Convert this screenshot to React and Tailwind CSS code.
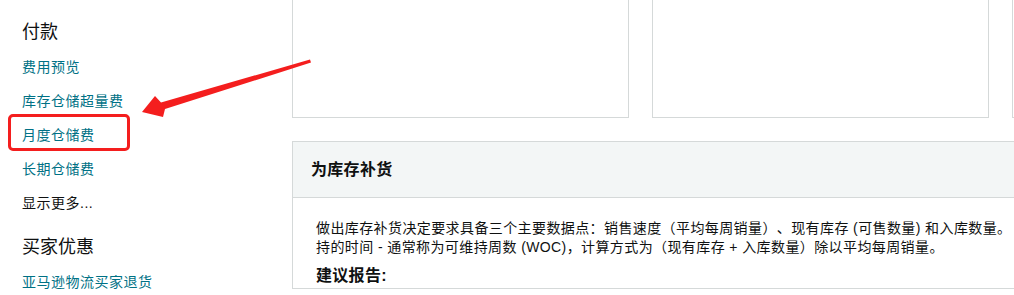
import React from "react";

const font = { fontFamily: '"Liberation Sans", "Noto Sans CJK SC", sans-serif' };

function Link({ children, dark }) {
  return (
    <div className={`h-[34px] leading-[34px] text-[14px] tracking-[0.5px] whitespace-nowrap ${dark ? "text-[#0f1111]" : "text-[#007185]"}`}>
      {children}
    </div>
  );
}

export default function App() {
  return (
    <div
      className="relative w-[1014px] h-[295px] overflow-hidden bg-white flex"
      style={font}
    >
      {/* Sidebar */}
      <div className="w-[292px] shrink-0 pl-[22px] pt-[20px] flex flex-col">
        <div className="h-[24px] leading-[24px] text-[18px] text-[#0f1111]">付款</div>
        <div className="mt-[6px]">
          <Link>费用预览</Link>
          <Link>库存仓储超量费</Link>
          <div className="relative">
            <Link>月度仓储费</Link>
            <div className="absolute left-[-14px] top-[-4px] w-[122px] h-[37px] border-[3px] border-[#f41e1e] rounded-[5px]" />
          </div>
          <Link>长期仓储费</Link>
          <Link dark>显示更多...</Link>
        </div>
        <div className="mt-[15px] h-[24px] leading-[24px] text-[18px] text-[#0f1111]">买家优惠</div>
        <div className="mt-[6px]">
          <Link>亚马逊物流买家退货</Link>
        </div>
      </div>

      {/* Main */}
      <div className="flex-1 min-w-0 overflow-hidden">
        <div className="flex gap-[23px]">
          <div className="w-[337px] h-[118px] shrink-0 border border-t-0 border-[#d5d9d9] bg-white" />
          <div className="w-[337px] h-[118px] shrink-0 border border-t-0 border-[#d5d9d9] bg-white" />
          <div className="w-[337px] h-[118px] shrink-0 border border-t-0 border-[#d5d9d9] bg-white" />
        </div>
        <div className="mt-[23px] w-[1100px] border border-[#d5d9d9]">
          <div className="h-[56px] bg-[#f3f6f6] border-b border-[#d5d9d9] flex items-center pl-[18px]">
            <span className="text-[16px] font-bold text-[#0f1111] tracking-[0.3px]">为库存补货</span>
          </div>
          <div className="pl-[23px] pt-[21px] text-[#0f1111] [text-spacing-trim:space-all]">
            <div className="text-[14px] leading-[19px] whitespace-nowrap tracking-[0.4px]">
              做出库存补货决定要求具备三个主要数据点：销售速度（平均每周销量）、现有库存 (可售数量) 和入库数量。
            </div>
            <div className="text-[14px] leading-[19px] whitespace-nowrap tracking-[0.4px]">
              持的时间 - 通常称为可维持周数 (WOC)，计算方式为（现有库存 + 入库数量）除以平均每周销量。
            </div>
            <div className="mt-[7px] text-[16px] leading-[24px] font-bold tracking-[0.3px]">建议报告:</div>
          </div>
        </div>
      </div>

      {/* Arrow */}
      <svg
        className="absolute left-0 top-0 pointer-events-none"
        width="1014"
        height="295"
        viewBox="0 0 1014 295"
      >
        <polygon
          points="142,112 155,96 161,102.5 310,59.5 311,62.5 165,109 163,117"
          fill="#f41e1e"
        />
      </svg>
    </div>
  );
}
